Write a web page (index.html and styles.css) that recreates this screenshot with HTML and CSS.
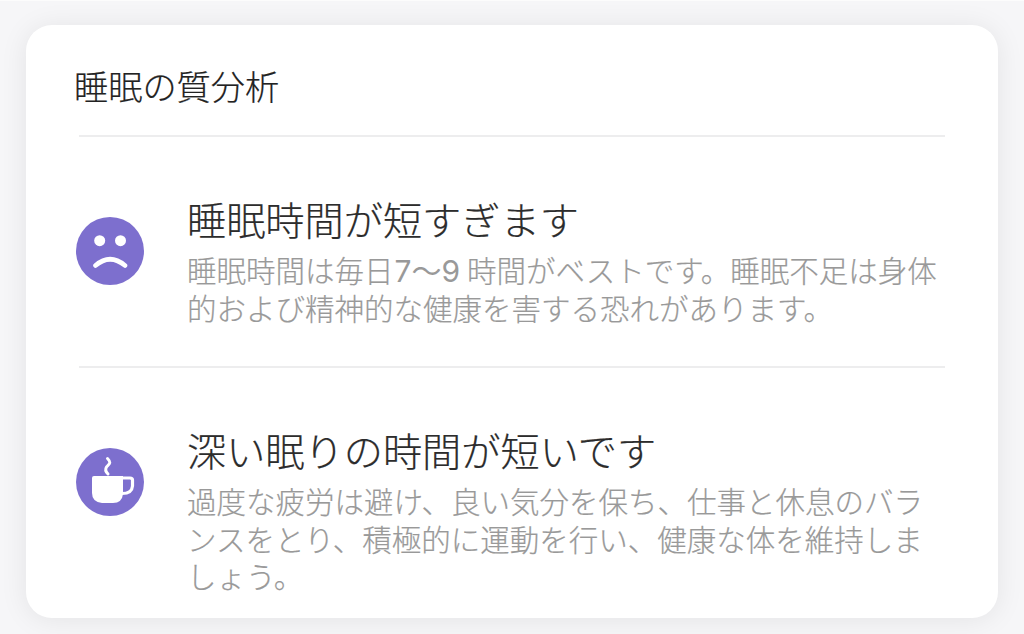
FILE: index.html
```html
<!DOCTYPE html>
<html lang="ja">
<head>
    <meta charset="UTF-8">
    <meta name="viewport" content="width=device-width, initial-scale=1.0">
    <title>睡眠の質分析</title>
    <link rel="stylesheet" href="styles.css">
</head>
<body>
    <div class="card">
        <h1>睡眠の質分析</h1>
        <div class="item">
            <svg class="icon" viewBox="0 0 68 68">
                <circle cx="34" cy="34" r="34" fill="#7d6fce"/>
                <circle cx="23.700" cy="23.700" r="5.500" fill="#fff"/>
                <circle cx="44.500" cy="23.700" r="5.500" fill="#fff"/>
                <path d="M19.500 48.500Q34 36 49 48.500" fill="none" stroke="#fff" stroke-width="4.600" stroke-linecap="round"/>
            </svg>
            <div class="text">
                <h2>睡眠時間が短すぎます</h2>
                <p>睡眠時間は毎日<span class="num">7〜9</span>時間がベストです。睡眠不足は身体<br>的および精神的な健康を害する恐れがあります。</p>
            </div>
        </div>
        <div class="item">
            <svg class="icon" viewBox="0 0 68 68">
                <circle cx="34" cy="34" r="34" fill="#7d6fce"/>
                <path d="M18 28H47V46Q46 55 37 55H26Q16 54 16 45V30Q16 28 18 28Z" fill="#fff"/>
                <path d="M46 30H54Q56.500 30 56.500 32V38Q56 45.500 46 45.500" fill="none" stroke="#fff" stroke-width="3.200"/>
                <path d="M31.500 10.500C36 15 33 16 30.500 19C28.500 22 30 24 32 26" fill="none" stroke="#fff" stroke-width="3" stroke-linecap="round"/>
            </svg>
            <div class="text">
                <h2>深い眠りの時間が短いです</h2>
                <p>過度な疲労は避け、良い気分を保ち、仕事と休息のバラ<br>ンスをとり、積極的に運動を行い、健康な体を維持しま<br>しょう。</p>
            </div>
        </div>
    </div>
</body>
</html>
```
FILE: styles.css
```css
* {
    box-sizing: border-box;
}
body {
    font-family: "Noto Sans CJK JP", sans-serif;
    font-weight: 300;
    margin: 0;
    padding: 24px 26px 16px;
    height: 634px;
    background-color: #f6f6f8;
    border-top: 1px solid #fcfcfc;
    overflow: hidden;
}
.card {
    height: 593px;
    padding: 35px 53px 0;
    background-color: white;
    border-radius: 26px;
    box-shadow: 0 2px 28px rgba(0,0,0,0.08);
}
h1, h2, p {
    margin: 0;
    font-weight: 300;
    white-space: nowrap;
}
h1 {
    height: 75px;
    margin-left: -5px;
    font-size: 34.200px;
    line-height: 50px;
    color: #222;
    -webkit-text-stroke: 0.2px #222;
}
.item {
    display: flex;
    height: 231px;
    border-top: 2px solid #ededee;
}
.icon {
    width: 68px;
    height: 68px;
    margin: 79.500px 43px 0 -3px;
    flex-shrink: 0;
}
.text {
    padding-top: 53px;
}
h2 {
    font-size: 39.200px;
    line-height: 56px;
    color: #2c2c2c;
    -webkit-text-stroke: 0.2px #2c2c2c;
}
p {
    padding-top: 5px;
    font-size: 29.500px;
    line-height: 37.500px;
    color: #999;
    -webkit-text-stroke: 0.2px #999;
}
.num {
    margin: 0 7px 0 1px;
    font-family: Inter, "Noto Sans CJK JP", sans-serif;
    font-weight: 400;
    font-size: 30px;
    line-height: 1;
    -webkit-text-stroke: 0;
}
```
